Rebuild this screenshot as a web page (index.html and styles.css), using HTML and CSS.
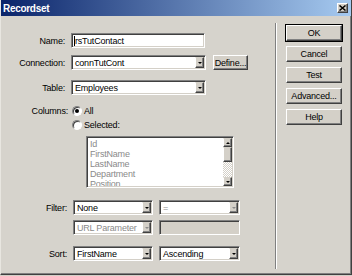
FILE: index.html
```html
<!DOCTYPE html>
<html lang="en">
<head>
    <meta charset="UTF-8">
    <title>Recordset</title>
    <link rel="stylesheet" href="styles.css">
</head>
<body>

<div class="dialog">
    <div class="titlebar">
        <span class="title">Recordset</span>
        <span class="close">
            <svg width="7" height="6" viewBox="0 0 7 6"><path d="M0.5 0.5 L6.5 5.5 M6.5 0.5 L0.5 5.5" stroke="#000" stroke-width="1.5"/></svg>
        </span>
    </div>

    <div class="content">
        <div class="form">
            <div class="row row-name">
                <span class="label">Name:</span>
                <div class="textbox w-name"><span class="caret"></span>rsTutContact</div>
            </div>
            <div class="row row-conn">
                <span class="label">Connection:</span>
                <div class="select w-wide"><span class="value">connTutCont</span><span class="arrow"></span></div>
                <div class="btn btn-define">Define...</div>
            </div>
            <div class="row row-table">
                <span class="label">Table:</span>
                <div class="select w-wide"><span class="value">Employees</span><span class="arrow"></span></div>
            </div>
            <div class="row row-radio1">
                <span class="label label-cols">Columns:</span>
                <span class="radio checked"></span><span class="radio-text">All</span>
            </div>
            <div class="row row-radio2">
                <span class="label label-cols"></span>
                <span class="radio"></span><span class="radio-text">Selected:</span>
            </div>
            <div class="listbox">
                <div class="list-items">
                    <div>Id</div>
                    <div>FirstName</div>
                    <div>LastName</div>
                    <div>Department</div>
                    <div>Position</div>
                </div>
                <div class="scrollbar">
                    <span class="sb-btn"><span class="tri up"></span></span>
                    <span class="sb-thumb"></span>
                    <span class="sb-track"></span>
                    <span class="sb-btn"><span class="tri"></span></span>
                </div>
            </div>
            <div class="row row-filter low">
                <span class="label">Filter:</span>
                <div class="select w-half"><span class="value">None</span><span class="arrow"></span></div>
                <div class="select w-half2 disabled"><span class="value">=</span><span class="arrow"></span></div>
            </div>
            <div class="row row-param low">
                <span class="label"></span>
                <div class="select w-half disabled"><span class="value">URL Parameter</span><span class="arrow"></span></div>
                <div class="textbox w-half2 disabled"></div>
            </div>
            <div class="row row-sort low">
                <span class="label">Sort:</span>
                <div class="select w-half"><span class="value">FirstName</span><span class="arrow"></span></div>
                <div class="select w-half2"><span class="value">Ascending</span><span class="arrow"></span></div>
            </div>
        </div>

        <div class="divider"></div>

        <div class="buttons">
            <div class="btn btn-side default">OK</div>
            <div class="btn btn-side">Cancel</div>
            <div class="btn btn-side">Test</div>
            <div class="btn btn-side">Advanced...</div>
            <div class="btn btn-side">Help</div>
        </div>
    </div>
</div>

</body>
</html>
```

FILE: styles.css
```css
body {
    margin: 0;
    background: #d4d0c8;
    font-family: 'Liberation Sans', Arial, sans-serif;
    font-size: 9px;
    letter-spacing: -0.2px;
    color: #000;
}

.dialog {
    width: 352px;
    height: 275px;
    box-sizing: border-box;
    background: #d6d3cc;
    border-left: 1px solid #e8e6e0;
    border-right: 1px solid #404040;
    border-bottom: 1px solid #404040;
    box-shadow: inset -1px -1px #808080;
}

/* title bar */
.titlebar {
    height: 16px;
    display: flex;
    align-items: center;
    justify-content: space-between;
    padding: 0 3px 0 2px;
    background: linear-gradient(to right, #0a246a, #a6caf0);
}

.title {
    color: #fff;
    font-weight: bold;
    font-size: 10px;
    letter-spacing: -0.3px;
}

.close {
    width: 11px;
    height: 10px;
    box-sizing: border-box;
    display: flex;
    align-items: center;
    justify-content: center;
    background: #d4d0c8;
    border: 1px solid;
    border-color: #fff #404040 #404040 #fff;
    box-shadow: inset -1px -1px #808080;
}

.content {
    display: flex;
}

/* left side form */
.form {
    width: 274px;
}

.row {
    display: flex;
    align-items: center;
    height: 15px;
}

.label {
    width: 64px;
    margin-right: 6px;
    text-align: right;
    flex-shrink: 0;
}

.label-cols {
    width: 67px;
    margin-right: 3px;
}

.low .label {
    width: 66px;
    margin-right: 6px;
}

.row-name { margin-top: 17px; }
.row-conn { margin-top: 7px; }
.row-table { margin-top: 10px; }
.row-radio1 { margin-top: 9px; height: 13px; }
.row-radio2 { margin-top: 1px; height: 13px; }
.row-filter { margin-top: 12px; }
.row-param { margin-top: 5px; }
.row-sort { margin-top: 11px; }

.textbox, .select {
    height: 15px;
    box-sizing: border-box;
    background: #fff;
    border: 1px solid;
    border-color: #808080 #fff #fff #808080;
    box-shadow: inset 1px 1px #404040, inset -1px -1px #d4d0c8;
    display: flex;
    align-items: center;
    white-space: nowrap;
    overflow: hidden;
}

.textbox {
    padding-left: 2px;
}

.caret {
    width: 1px;
    height: 10px;
    background: #000;
}

.select .value {
    flex: 1;
    padding-left: 3px;
    overflow: hidden;
}

.select .arrow {
    width: 9px;
    height: 11px;
    margin-right: 1px;
    flex-shrink: 0;
    box-sizing: border-box;
    background: #d4d0c8;
    border: 1px solid;
    border-color: #d4d0c8 #404040 #404040 #fff;
    box-shadow: inset -1px -1px #808080;
    display: flex;
    align-items: center;
    justify-content: center;
}

.select .arrow::after {
    content: "";
    border-left: 2px solid transparent;
    border-right: 2px solid transparent;
    border-top: 2px solid #000;
    margin-top: 1px;
}

.disabled {
    color: #8a8a8a;
}

.select.disabled .arrow::after {
    border-top-color: #8a8a8a;
}

.textbox.disabled {
    background: #d4d0c8;
}

.w-name { width: 134px; }
.w-wide { width: 135px; }
.w-half { width: 80px; }
.w-half2 { width: 81px; margin-left: 6px; }

/* buttons */
.btn {
    box-sizing: border-box;
    background: #d4d0c8;
    border: 1px solid;
    border-color: #fff #404040 #404040 #fff;
    box-shadow: inset -1px -1px #808080;
    display: flex;
    align-items: center;
    justify-content: center;
    white-space: nowrap;
}

.btn-define {
    width: 35px;
    height: 15px;
    margin-left: 7px;
}

.btn-side {
    width: 56px;
    height: 16px;
    margin-bottom: 5px;
}

.btn.default {
    outline: 1px solid #000;
}

/* radios */
.radio {
    width: 10px;
    height: 10px;
    box-sizing: border-box;
    border-radius: 50%;
    background: #fff;
    border: 1px solid;
    border-color: #808080 #fff #fff #808080;
    box-shadow: inset 1px 1px #404040;
    display: flex;
    align-items: center;
    justify-content: center;
    margin-left: 1px;
}

.radio.checked::after {
    content: "";
    width: 4px;
    height: 4px;
    border-radius: 50%;
    background: #000;
}

.radio-text {
    margin-left: 2px;
}

/* list box */
.listbox {
    margin: 5px 0 0 85px;
    width: 148px;
    height: 52px;
    box-sizing: border-box;
    background: #fff;
    border: 1px solid;
    border-color: #808080 #fff #fff #808080;
    box-shadow: inset 1px 1px #404040, inset -1px -1px #d4d0c8;
    display: flex;
    padding: 1px;
}

.list-items {
    flex: 1;
    color: #8a8a8a;
    line-height: 10px;
    padding: 1px 0 0 2px;
    overflow: hidden;
}

.scrollbar {
    width: 9px;
    display: flex;
    flex-direction: column;
    background: repeating-conic-gradient(#fff 0 25%, #d4d0c8 0 50%) 0 0 / 2px 2px;
}

.sb-btn, .sb-thumb {
    box-sizing: border-box;
    background: #d4d0c8;
    border: 1px solid;
    border-color: #d4d0c8 #404040 #404040 #fff;
    box-shadow: inset -1px -1px #808080;
}

.sb-btn {
    height: 9px;
    display: flex;
    align-items: center;
    justify-content: center;
}

.sb-thumb {
    height: 15px;
}

.sb-track {
    flex: 1;
}

.tri {
    border-left: 2px solid transparent;
    border-right: 2px solid transparent;
    border-top: 2px solid #000;
}

.tri.up {
    border-top: none;
    border-bottom: 2px solid #000;
}

/* right side */
.divider {
    width: 1px;
    height: 246px;
    margin-top: 7px;
    background: #808080;
    border-right: 1px solid #fff;
}

.buttons {
    padding: 9px 0 0 9px;
}
```
